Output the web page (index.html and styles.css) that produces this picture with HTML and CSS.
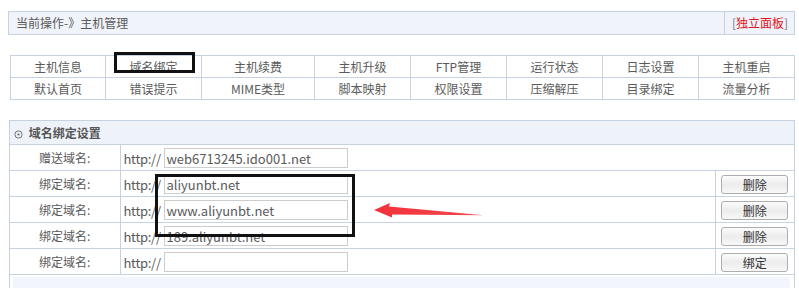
FILE: index.html
```html
<!DOCTYPE html>
<html lang="zh-CN">
<head>
    <meta charset="UTF-8">
    <title>主机管理</title>
    <link rel="stylesheet" href="styles.css">
</head>
<body>
    <div class="page">
        <div class="crumb">
            <div class="crumb-text">当前操作-》主机管理</div>
            <div class="crumb-side">[<a href="#">独立面板</a>]</div>
        </div>

        <table class="nav">
            <colgroup>
                <col class="col-a"><col class="col-b"><col class="col-wide"><col class="col-b">
                <col class="col-b"><col class="col-b"><col class="col-b"><col class="col-b">
            </colgroup>
            <tr>
                <td>主机信息</td><td>域名绑定</td><td>主机续费</td><td>主机升级</td>
                <td>FTP管理</td><td>运行状态</td><td>日志设置</td><td>主机重启</td>
            </tr>
            <tr>
                <td>默认首页</td><td>错误提示</td><td>MIME类型</td><td>脚本映射</td>
                <td>权限设置</td><td>压缩解压</td><td>目录绑定</td><td>流量分析</td>
            </tr>
        </table>

        <div class="panel">
            <div class="panel-head">
                <svg class="dot-icon" width="9" height="9" viewBox="0 0 9 9">
                    <circle cx="4.5" cy="4.5" r="3.6" fill="none" stroke="#666" stroke-width="0.9"/>
                    <circle cx="4.5" cy="4.5" r="1.1" fill="#666"/>
                </svg>
                域名绑定设置
            </div>
            <table class="form">
                <colgroup>
                    <col class="col-label"><col><col class="col-act">
                </colgroup>
                <tr>
                    <td class="label">赠送域名:</td>
                    <td class="field" colspan="2"><span class="proto">http://</span><input type="text" value="web6713245.ido001.net"></td>
                </tr>
                <tr>
                    <td class="label">绑定域名:</td>
                    <td class="field"><span class="proto">http://</span><input type="text" value="aliyunbt.net"></td>
                    <td class="act"><button>删除</button></td>
                </tr>
                <tr>
                    <td class="label">绑定域名:</td>
                    <td class="field"><span class="proto">http://</span><input type="text" value="www.aliyunbt.net"></td>
                    <td class="act"><button>删除</button></td>
                </tr>
                <tr>
                    <td class="label">绑定域名:</td>
                    <td class="field"><span class="proto">http://</span><input type="text" value="189.aliyunbt.net"></td>
                    <td class="act"><button>删除</button></td>
                </tr>
                <tr>
                    <td class="label">绑定域名:</td>
                    <td class="field"><span class="proto">http://</span><input type="text" value=""></td>
                    <td class="act"><button>绑定</button></td>
                </tr>
            </table>
            <div class="panel-foot"></div>
        </div>
    </div>

    <!-- annotations drawn over the screenshot -->
    <div class="mark mark-tab"></div>
    <div class="mark mark-rows"></div>
    <svg class="arrow" width="120" height="24" viewBox="370 200 120 24">
        <defs>
            <linearGradient id="arrowFill" x1="0" y1="0" x2="1" y2="0">
                <stop offset="0" stop-color="#f2303a"/>
                <stop offset="0.8" stop-color="#f2454a"/>
                <stop offset="1" stop-color="#f46a6a"/>
            </linearGradient>
        </defs>
        <polygon points="374,210 390,203 389,206.5 484,215.2 392,214.5 392,217.5" fill="url(#arrowFill)"/>
    </svg>
</body>
</html>
```
FILE: styles.css
```css
body {
    margin: 0;
    background: #fff;
    font-family: "Noto Sans CJK SC", "Noto Sans", sans-serif;
    font-size: 12px;
    color: #5a5a5a;
}
.page {
    padding: 11px 4px 0 8px;
}
.crumb {
    display: flex;
    height: 22px;
    border: 1px solid #c4d2e2;
    background: #f0f4fa;
    line-height: 22px;
}
.crumb-text {
    flex: 1;
    padding-left: 7px;
}
.crumb-side {
    width: 62px;
    padding-left: 7px;
    border-left: 1px solid #c4d2e2;
    color: #777;
}
.crumb-side a {
    color: #e0141c;
    text-decoration: none;
}
.nav {
    border-collapse: collapse;
    margin: 20px 1px 0 2px;
    width: 785px;
    table-layout: fixed;
}
.nav td {
    border: 1px solid #c4d2e2;
    height: 21px;
    padding: 0;
    text-align: center;
}
.col-a { width: 95px; }
.col-b { width: 96px; }
.col-wide { width: 113px; }
.panel {
    margin: 20px 0 0 1px;
    border: 1px solid #c4d2e2;
    border-bottom: none;
}
.panel-head {
    height: 23px;
    line-height: 23px;
    padding-left: 3px;
    background: #eef3fa;
    border-bottom: 1px solid #c4d2e2;
    font-weight: bold;
    color: #555;
}
.dot-icon {
    margin: 0 3px 0 1px;
    vertical-align: -1px;
}
.form {
    width: 100%;
    border-collapse: collapse;
    table-layout: fixed;
}
.col-label { width: 110px; }
.col-act { width: 79px; }
.form td {
    border: 1px solid #c4d2e2;
    height: 25px;
    padding: 0;
}
.form tr td:first-child { border-left: none; }
.form tr td:last-child { border-right: none; }
.form tr:first-child td { border-top: none; }
.label {
    text-align: center;
}
.field {
    padding-left: 3px !important;
    font-size: 13px;
    white-space: nowrap;
}
.proto {
    display: inline-block;
    width: 40px;
    letter-spacing: -0.3px;
    vertical-align: middle;
}
.field input {
    width: 184px;
    height: 20px;
    box-sizing: border-box;
    border: 1px solid #cdcdcd;
    padding: 0 2px;
    font-family: inherit;
    font-size: 13px;
    color: #5a5a5a;
    vertical-align: middle;
}
.act {
    text-align: center;
}
.act button {
    width: 67px;
    height: 19px;
    padding: 0;
    border: 1px solid #adadad;
    border-radius: 3px;
    background: linear-gradient(#fcfcfc, #ececec 50%, #f8f8f8);
    font-family: inherit;
    font-size: 12px;
    color: #333;
    vertical-align: middle;
}
.panel-foot {
    height: 20px;
    margin: 2px 4px 0 3px;
    background: #f2f5fb;
}
.mark {
    position: absolute;
    border: 3px solid #111;
}
.mark-tab {
    left: 114px;
    top: 52px;
    width: 75px;
    height: 15px;
}
.mark-rows {
    left: 155px;
    top: 174px;
    width: 194px;
    height: 57px;
}
.arrow {
    position: absolute;
    left: 370px;
    top: 200px;
}
```
